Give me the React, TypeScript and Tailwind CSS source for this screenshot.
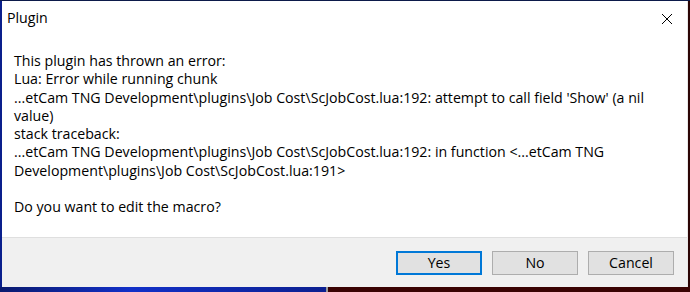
import React from 'react';

const lines = [
  'This plugin has thrown an error:',
  'Lua: Error while running chunk',
  "...etCam TNG Development\\plugins\\Job Cost\\ScJobCost.lua:192: attempt to call field 'Show' (a nil",
  'value)',
  'stack traceback:',
  '...etCam TNG Development\\plugins\\Job Cost\\ScJobCost.lua:192: in function <...etCam TNG',
  'Development\\plugins\\Job Cost\\ScJobCost.lua:191>',
  '\u00a0',
  'Do you want to edit the macro?',
];

const DialogButton: React.FC<{ label: string; focused?: boolean }> = ({ label, focused }) => (
  <button
    className={
      focused
        ? 'h-[24px] w-[86px] border-2 border-[#0078d7] bg-[#e1e1e1] text-[14.2px] leading-none text-black'
        : 'h-[24px] w-[86px] border border-[#adadad] bg-[#e1e1e1] text-[14.2px] leading-none text-black'
    }
  >
    {label}
  </button>
);

const App: React.FC = () => {
  return (
    <div className="flex h-[292px] w-[690px] flex-col overflow-hidden bg-[#2b0404] font-['Open_Sans',sans-serif]">
      {/* desktop strip above */}
      <div className="h-[1px] bg-[#0c1a4a]" />

      <div className="flex">
        <div className="w-[2px] bg-[#0a1f8c]" />

        {/* dialog */}
        <div className="flex h-[286px] w-[685px] flex-col bg-white">
          <div className="flex h-[34px] items-start justify-between pl-[5px] pr-[14px] pt-[6px]">
            <span className="text-[14.2px] text-black">Plugin</span>
            <svg width="12" height="12" viewBox="0 0 12 12" className="mt-[6px]">
              <path d="M1 1 L11 11 M11 1 L1 11" stroke="#000" strokeWidth="1" fill="none" />
            </svg>
          </div>

          <div className="flex-1 pl-[12px] pt-[17px] text-[14.2px] leading-[18.3px] text-black whitespace-nowrap">
            {lines.map((line, i) => (
              <div key={i}>{line}</div>
            ))}
          </div>

          <div className="flex h-[50px] items-start justify-end gap-[10px] border-t border-[#dfdfdf] bg-[#f0f0f0] pr-[13px] pt-[13px]">
            <DialogButton label="Yes" focused />
            <DialogButton label="No" />
            <DialogButton label="Cancel" />
          </div>
        </div>

        <div className="w-[1px] bg-[#e8e8e8]" />
        <div className="flex-1 bg-[#2b0404]" />
      </div>

      {/* desktop strip below */}
      <div className="flex h-[5px]">
        <div className="w-[326px] bg-[linear-gradient(90deg,#0a1a6e,#1230c8_40%,#0c2090)]" />
        <div className="w-[2px] bg-[#9a9a9a]" />
        <div className="flex-1 bg-[#3a0303]" />
      </div>
    </div>
  );
};

export default App;
